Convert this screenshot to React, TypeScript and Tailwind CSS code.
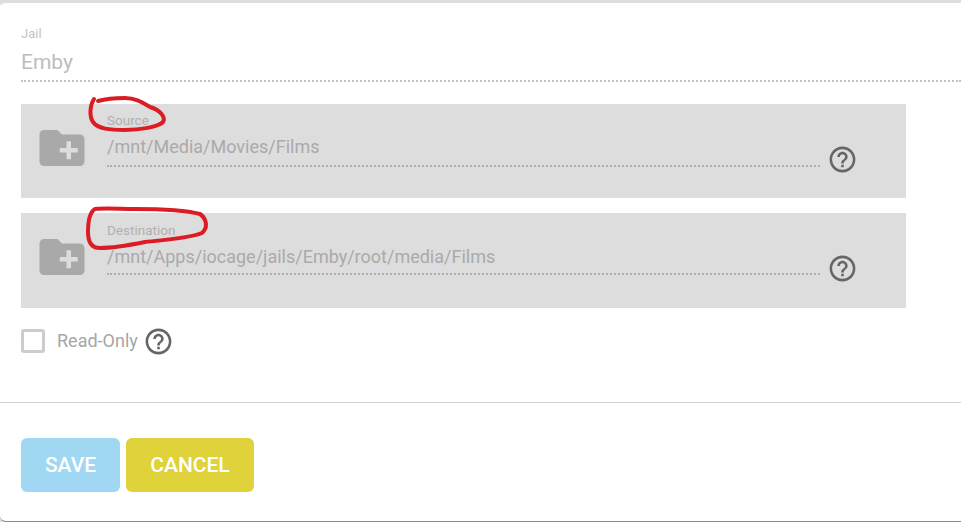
import React from 'react';

const FOLDER = 'M20 6h-8l-2-2H4c-1.11 0-1.99.89-1.99 2L2 18c0 1.11.89 2 2 2h16c1.11 0 2-.89 2-2V8c0-1.11-.89-2-2-2zm-1 8h-3v3h-2v-3h-3v-2h3V9h2v3h3v2z';
const HELP = 'M11 18h2v-2h-2v2zm1-16C6.48 2 2 6.48 2 12s4.48 10 10 10 10-4.48 10-10S17.52 2 12 2zm0 18c-4.41 0-8-3.59-8-8s3.59-8 8-8 8 3.59 8 8-3.59 8-8 8zm0-14c-2.21 0-4 1.79-4 4h2c0-1.1.9-2 2-2s2 .9 2 2c0 2-3 1.75-3 5h2c0-2.25 3-2.5 3-5 0-2.21-1.79-4-4-4z';

function HelpIcon() {
  return (
    <svg viewBox="0 0 24 24" className="w-[31px] h-[31px] fill-[#666666] shrink-0">
      <path d={HELP} />
    </svg>
  );
}

interface PathRowProps {
  label: string;
  value: string;
  className: string;
  fieldClassName: string;
}

function PathRow({ label, value, className, fieldClassName }: PathRowProps) {
  return (
    <div className={`flex bg-[#dddddd] w-[885px] pl-[13.5px] ${className}`}>
      <svg viewBox="0 0 24 24" className="w-[54px] h-[54px] mt-[17px] fill-[#a9a9a9] shrink-0">
        <path d={FOLDER} />
      </svg>
      <div className={`ml-[18.5px] w-[713px] border-b-2 border-dotted border-[#b0b0b0] ${fieldClassName}`}>
        <div className="text-[13.5px] leading-4 text-[#b0b0b0]">{label}</div>
        <div className="text-lg leading-6 mt-[7px] text-[#aaaaaa]">{value}</div>
      </div>
      <div className="ml-[7px] mt-[40px]">
        <HelpIcon />
      </div>
    </div>
  );
}

export default function App() {
  return (
    <div className="w-[961px] h-[522px] bg-[#dddddd]">
      <div className="relative w-[961px] h-[522px] overflow-hidden bg-white rounded-l-[6px] border-t-[3px] border-b border-t-[#dddddd] border-b-[#888888] font-['Roboto',sans-serif]">
        <div className="pl-[21px] pt-[23px]">
          <div className="border-b-2 border-dotted border-[#c2c2c2] h-[56px]">
            <div className="text-[13px] leading-4 text-[#c4c4c4]">Jail</div>
            <div className="text-[21px] leading-7 mt-[6px] text-[#bdbdbd]">Emby</div>
          </div>
          <PathRow label="Source" value="/mnt/Media/Movies/Films" className="mt-[22px] h-[94px]" fieldClassName="mt-[8px] h-[55px]" />
          <PathRow label="Destination" value="/mnt/Apps/iocage/jails/Emby/root/media/Films" className="mt-[15px] h-[95px]" fieldClassName="mt-[9px] h-[53px]" />
          <div className="flex items-center mt-[20px] h-[26px]">
            <div className="w-[24px] h-[24px] rounded-[3px] border-[3px] border-[#cccccc]" />
            <span className="ml-[12px] text-lg text-[#a6a6a6]">Read-Only</span>
            <div className="ml-[5px] flex">
              <HelpIcon />
            </div>
          </div>
        </div>
        <div className="mt-[48px] border-t border-[#d4d4d4]" />
        <div className="flex gap-[6px] pl-[21px] pt-[35px]">
          <button className="w-[99px] h-[54px] pt-[1px] rounded-[6px] bg-[#a0d7f2] text-white text-[21px] font-medium">SAVE</button>
          <button className="w-[128px] h-[54px] pt-[1px] rounded-[6px] bg-[#dfd23a] text-white text-[21px] font-medium">CANCEL</button>
        </div>
        {/* red marker scribbles drawn over the form */}
        <svg viewBox="0 0 961 522" className="absolute left-0 top-[-3px] w-[961px] h-[522px] pointer-events-none" fill="none" stroke="#dc1c24" strokeWidth="4" strokeLinecap="round" strokeLinejoin="round">
          <path d="M94 99C90 105 89 116 93 122C98 129 110 130 125 130C140 130 158 127 163 122C166 117 160 110 150 107C143 103 136 98 125 98C115 98 105 99 98 101" />
          <path d="M95 209C90 212 88 222 88 232C88 243 92 248 100 248C115 248 130 245 145 242C165 240 190 238 202 233C208 228 207 219 200 214C185 210 160 209 135 209C120 209 105 208 95 209Z" />
        </svg>
      </div>
    </div>
  );
}
